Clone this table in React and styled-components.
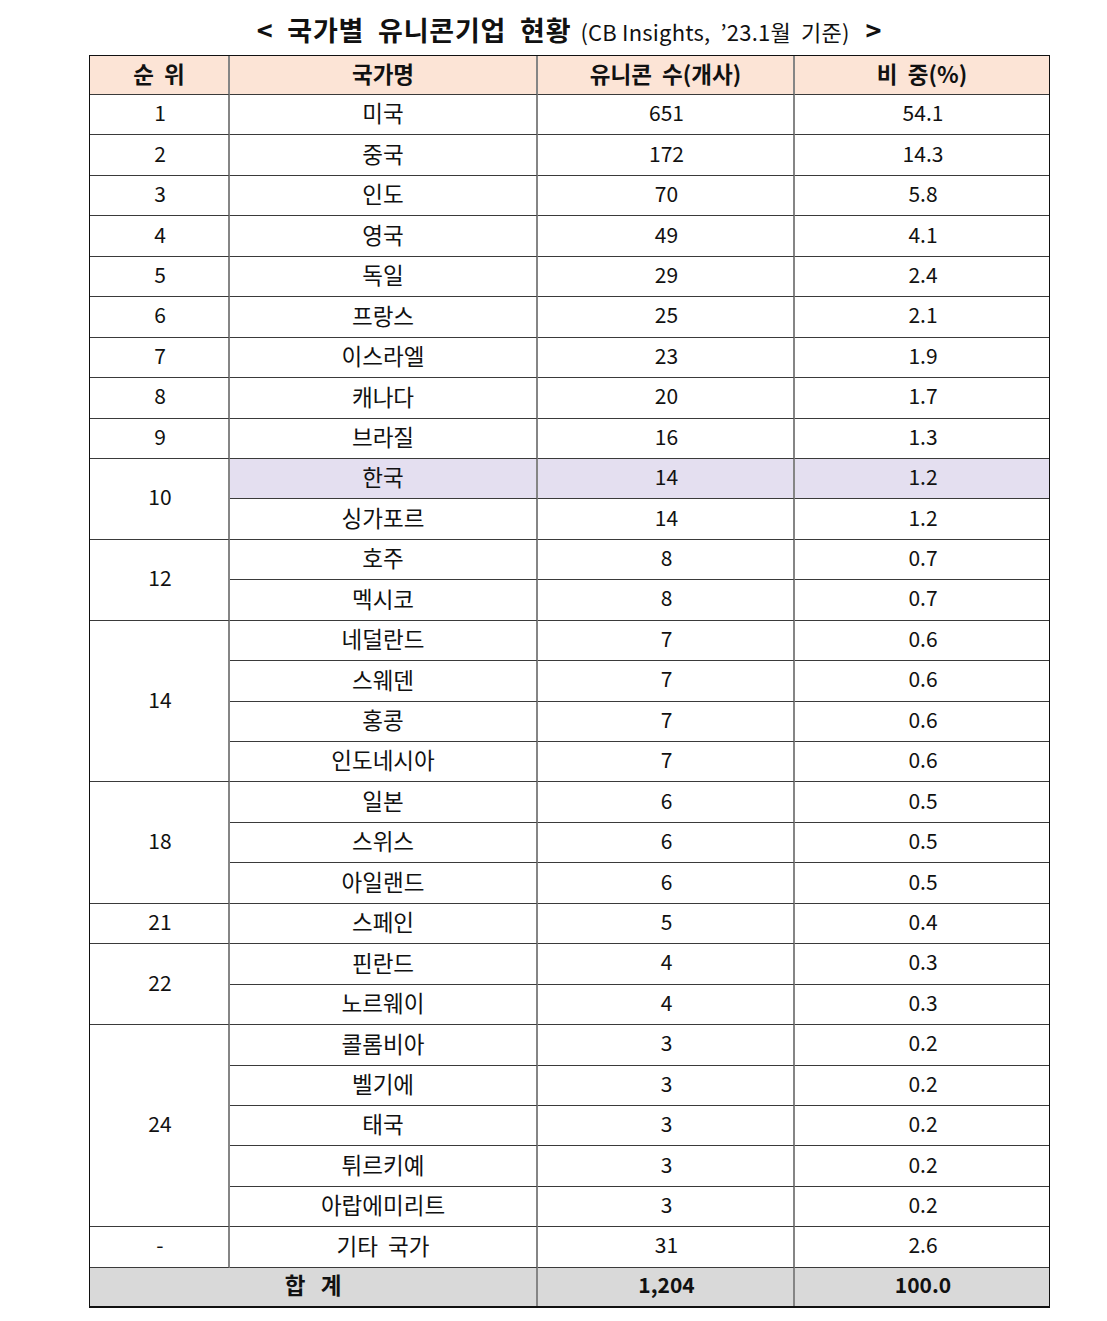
import React from 'react';
import styled, { createGlobalStyle } from 'styled-components';

const GlobalStyle = createGlobalStyle`
  body {
    margin: 0;
    background: #fff;
    font-family: 'Noto Sans CJK KR', 'Noto Sans', sans-serif;
    color: #111;
  }
`;

const Page = styled.div`
  width: 1107px;
  padding-top: 11px;
  box-sizing: border-box;
`;

const Title = styled.h1`
  margin: 0 0 0 89px;
  width: 961px;
  display: flex;
  justify-content: center;
  align-items: baseline;
  gap: 9px;
  font-size: 27px;
  font-weight: 700;
  letter-spacing: 0.8px;
  line-height: 38px;
  height: 44px;
  color: #111;
  white-space: pre;
`;

const Sub = styled.span`
  font-weight: 400;
  font-size: 22px;
  letter-spacing: 0.2px;
`;

const Table = styled.div`
  margin-left: 89px;
  width: 961px;
  display: grid;
  grid-template-columns: 140px 308px 257px 254px;
  grid-template-rows: 39px repeat(29, 40.45px) 38px;
  border: 1px solid #111;
  border-bottom-width: 2px;
  box-sizing: border-box;
`;

const Cell = styled.div`
  grid-column: ${(p) => p.$col} / span ${(p) => p.$colSpan || 1};
  grid-row: span ${(p) => p.$span || 1};
  display: flex;
  align-items: center;
  justify-content: center;
  box-sizing: border-box;
  border-right: ${(p) => (p.$last ? 'none' : '2px solid #858585')};
  border-bottom: ${(p) => (p.$bottom ? 'none' : '1px solid #3a3a3a')};
  background: ${(p) => p.$bg || '#fff'};
  font-size: ${(p) => (p.$ko ? '22.5px' : '21px')};
  line-height: 1;
  font-weight: ${(p) => (p.$bold ? 700 : 400)};
  white-space: pre;
  padding-bottom: 4px;
  padding-left: ${(p) => (p.$ko ? 0 : 2)}px;
`;

const groups = [
  ['1', [['미국', '651', '54.1']]],
  ['2', [['중국', '172', '14.3']]],
  ['3', [['인도', '70', '5.8']]],
  ['4', [['영국', '49', '4.1']]],
  ['5', [['독일', '29', '2.4']]],
  ['6', [['프랑스', '25', '2.1']]],
  ['7', [['이스라엘', '23', '1.9']]],
  ['8', [['캐나다', '20', '1.7']]],
  ['9', [['브라질', '16', '1.3']]],
  ['10', [['한국', '14', '1.2', true], ['싱가포르', '14', '1.2']]],
  ['12', [['호주', '8', '0.7'], ['멕시코', '8', '0.7']]],
  ['14', [['네덜란드', '7', '0.6'], ['스웨덴', '7', '0.6'], ['홍콩', '7', '0.6'], ['인도네시아', '7', '0.6']]],
  ['18', [['일본', '6', '0.5'], ['스위스', '6', '0.5'], ['아일랜드', '6', '0.5']]],
  ['21', [['스페인', '5', '0.4']]],
  ['22', [['핀란드', '4', '0.3'], ['노르웨이', '4', '0.3']]],
  ['24', [['콜롬비아', '3', '0.2'], ['벨기에', '3', '0.2'], ['태국', '3', '0.2'], ['튀르키예', '3', '0.2'], ['아랍에미리트', '3', '0.2']]],
  ['-', [['기타  국가', '31', '2.6']]],
];

const HEAD = '#fce4d6';
const MARK = '#e4dff0';
const TOTAL = '#d9d9d9';

export default function App() {
  return (
    <Page>
      <GlobalStyle />
      <Title>
        <span>{'<  국가별  유니콘기업  현황'}</span>
        <Sub>{'(CB Insights,  ’23.1월  기준)'}</Sub>
        <span>{' >'}</span>
      </Title>
      <Table>
        <Cell $col={1} $bg={HEAD} $bold $ko>{'순  위'}</Cell>
        <Cell $col={2} $bg={HEAD} $bold $ko>국가명</Cell>
        <Cell $col={3} $bg={HEAD} $bold $ko>{'유니콘  수(개사)'}</Cell>
        <Cell $col={4} $bg={HEAD} $bold $ko $last>{'비  중(%)'}</Cell>
        {groups.map(([rank, rows]) => (
          <React.Fragment key={rank}>
            <Cell $col={1} $span={rows.length}>{rank}</Cell>
            {rows.map(([name, count, pct, mark]) => (
              <React.Fragment key={name}>
                <Cell $col={2} $ko $bg={mark ? MARK : undefined}>{name}</Cell>
                <Cell $col={3} $bg={mark ? MARK : undefined}>{count}</Cell>
                <Cell $col={4} $bg={mark ? MARK : undefined} $last>{pct}</Cell>
              </React.Fragment>
            ))}
          </React.Fragment>
        ))}
        <Cell $col={1} $colSpan={2} $bg={TOTAL} $bold $ko $bottom>{'합   계'}</Cell>
        <Cell $col={3} $bg={TOTAL} $bold $bottom>1,204</Cell>
        <Cell $col={4} $bg={TOTAL} $bold $bottom $last>100.0</Cell>
      </Table>
    </Page>
  );
}
